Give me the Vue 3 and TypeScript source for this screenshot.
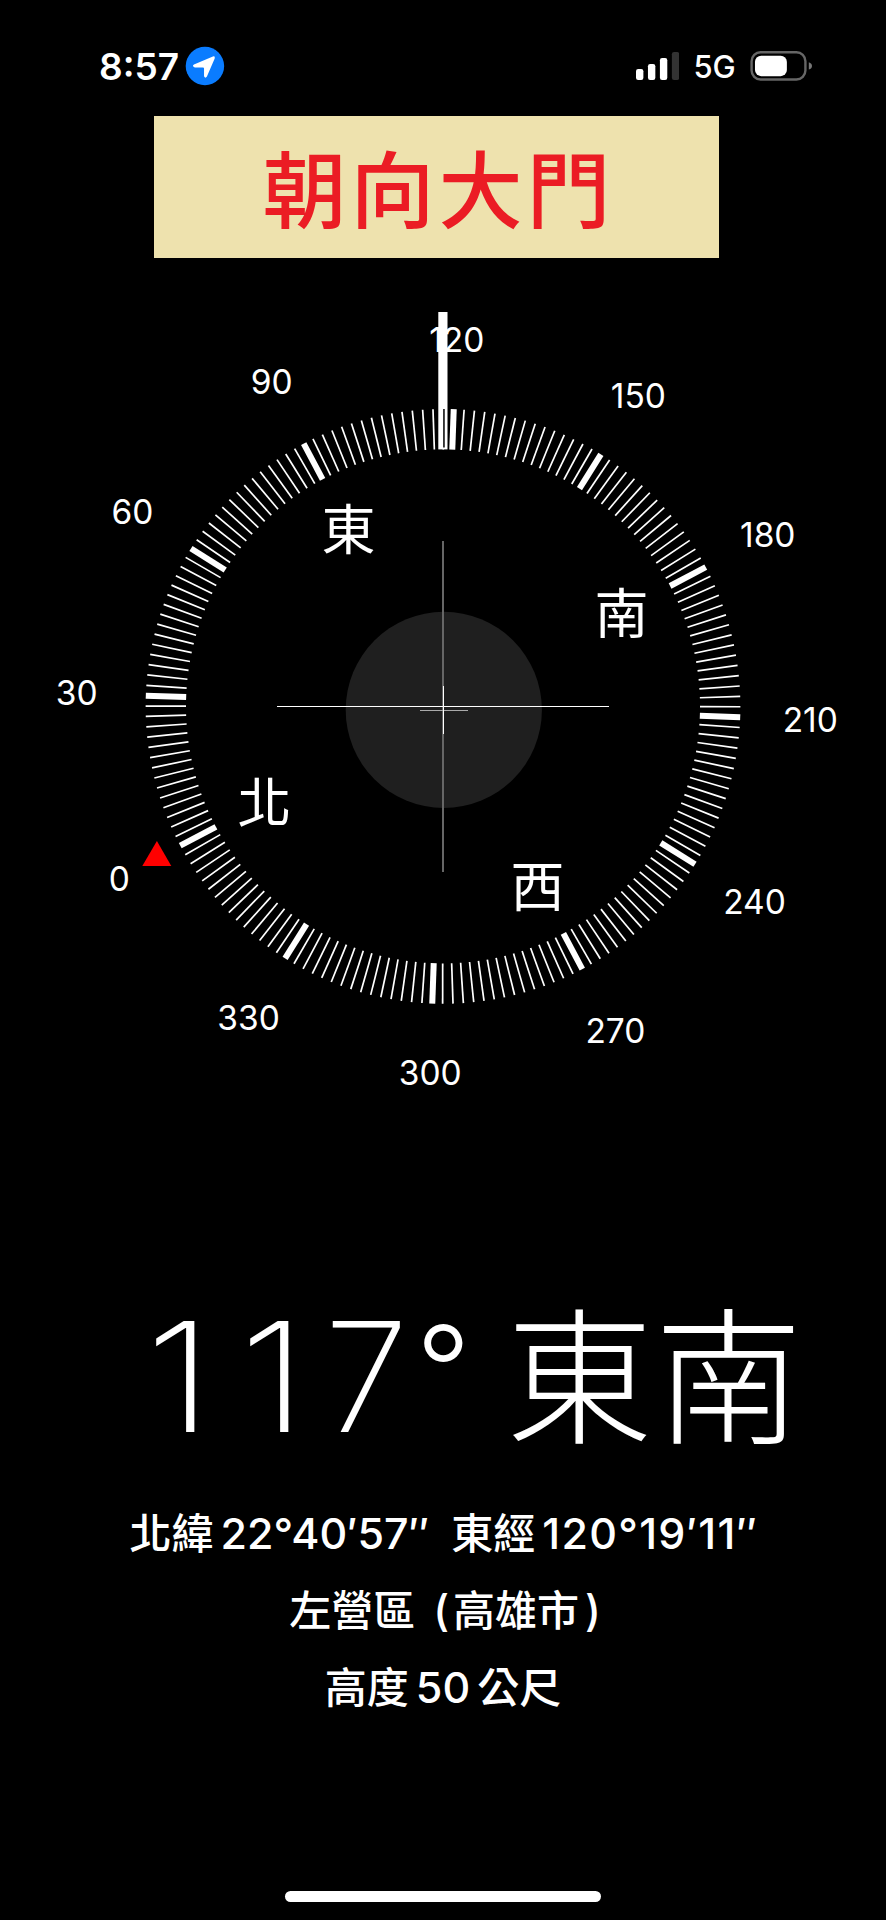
<script setup lang="ts">
interface Mark {
  text: string
  x: number
  y: number
}

const heading = 117.93
const cx = 443
const cy = 426.4

const place = (bearing: number, radius: number) => {
  const a = ((bearing - heading) * Math.PI) / 180
  return { x: cx + radius * Math.sin(a), y: cy - radius * Math.cos(a) }
}

const ticks = Array.from({ length: 180 }, (_, i) => {
  const bearing = i * 2
  const outer = place(bearing, 297.4)
  const inner = place(bearing, 257)
  return { bearing, outer, inner, major: bearing % 30 === 0 }
})

const degrees: Mark[] = Array.from({ length: 12 }, (_, i) => ({
  text: String(i * 30),
  ...place(i * 30, 367),
}))

const directions: Mark[] = ['北', '東', '南', '西'].map((text, i) => ({
  text,
  ...place(i * 90, 202),
}))
</script>

<template>
  <main class="screen">
    <header class="status">
      <span class="time">8:57</span>
      <svg class="location" viewBox="0 0 40 40">
        <circle cx="20" cy="20" r="19.3" fill="#0a7cff" />
        <path d="M9 18.6 28 10.4Q30.6 9.8 29.8 12.4L22 30.6Q20.4 33 19.1 30.4V22.4Q19 21.5 18.1 21.5H9.9Q6.6 20.4 9 18.6Z" fill="#fff" />
      </svg>
      <svg class="signal" viewBox="0 0 44 30">
        <rect x="0" y="18" width="7.4" height="11" rx="2.2" fill="#fff" />
        <rect x="12" y="13" width="7.4" height="16" rx="2.2" fill="#fff" />
        <rect x="24" y="7" width="7.4" height="22" rx="2.2" fill="#fff" />
        <rect x="36" y="1" width="7.4" height="28" rx="2.2" fill="#333" />
      </svg>
      <span class="network">5G</span>
      <svg class="battery" viewBox="0 0 64 32">
        <rect x="1.6" y="2.2" width="54" height="27.4" rx="9" fill="none" stroke="#666" stroke-width="2.4" />
        <rect x="5" y="5.6" width="32" height="20.6" rx="6.2" fill="#fff" />
        <path d="M59 12.2Q62.2 13.4 62.2 15.9T59 19.6Z" fill="#777" />
      </svg>
    </header>

    <h1 class="banner">朝向大門</h1>

    <svg class="compass" viewBox="0 0 886 860">
      <circle cx="443.8" cy="429.9" r="98.1" fill="#1f1f1f" />
      <rect x="442" y="261" width="2" height="331" fill="#666" />
      <rect x="277" y="426" width="332" height="1" fill="#fff" />
      <rect x="420" y="430" width="48" height="1" fill="#aaa" />
      <rect x="443" y="406" width="1" height="48" fill="#fff" />
      <line
        v-for="t in ticks"
        :key="t.bearing"
        :x1="t.inner.x"
        :y1="t.inner.y"
        :x2="t.outer.x"
        :y2="t.outer.y"
        :class="t.major ? 'tick major' : 'tick'"
      />
      <rect x="438.3" y="32" width="9.2" height="137.4" fill="#fff" />
      <rect x="443.2" y="129" width="1.5" height="38.5" fill="#000" />
      <polygon points="156.9,561 171.3,586 142.3,586" fill="#f00" />
      <text v-for="d in degrees" :key="d.text" :x="d.x + 0.5" :y="d.y + 12.3" class="degree">{{ d.text }}</text>
      <text v-for="d in directions" :key="d.text" :x="d.x" :y="d.y + 22" class="direction">{{ d.text }}</text>
    </svg>

    <section class="heading">
      <span class="value"><span class="one hundreds">1</span><span class="one tens">1</span><span>7</span></span>
      <span class="ring">°</span>
      <span class="bearing">東南</span>
    </section>

    <section class="details">
      <p class="coords">
        <span>北緯</span><span class="num lat">22°40′57″</span><span>東經</span><span class="num lon">120°19′11″</span>
      </p>
      <p class="place"><span>左營區</span><span class="num open">(</span><span>高雄市</span><span class="num close">)</span></p>
      <p class="altitude"><span>高度</span><span class="num alt">50</span><span>公尺</span></p>
    </section>

    <div class="home"></div>
  </main>
</template>

<style>
body {
  background: #000;
}
</style>

<style scoped>
.screen {
  display: flex;
  flex-direction: column;
  width: 886px;
  height: 1920px;
  overflow: hidden;
  background: #000;
  color: #fff;
  font-family: Inter, "Noto Sans CJK TC", sans-serif;
}

.status {
  display: flex;
  align-items: center;
  height: 116px;
  padding: 16px 72px 0 99px;
  box-sizing: border-box;
}

.time {
  width: 86px;
  font-size: 37px;
  font-weight: 600;
  white-space: nowrap;
}

.location {
  width: 40px;
  height: 40px;
  margin-top: -1px;
}

.signal {
  width: 44px;
  height: 30px;
  margin-left: 411px;
}

.network {
  width: 57px;
  margin-left: 14px;
  font-size: 31px;
  font-weight: 500;
}

.battery {
  width: 64px;
  height: 32px;
}

.banner {
  width: 565px;
  height: 142px;
  margin: 0 0 0 153.5px;
  padding-left: 5px;
  box-sizing: border-box;
  background: #eee2ae;
  color: #eb1c24;
  font-family: "Noto Sans CJK TC", sans-serif;
  font-size: 84px;
  font-weight: 500;
  line-height: 139px;
  letter-spacing: 4px;
  text-align: center;
}

.compass {
  flex: none;
  width: 886px;
  height: 860px;
  margin-top: 22px;
}

.tick {
  stroke: #fff;
  stroke-width: 1.7;
}

.major {
  stroke-width: 6;
}

.degree {
  fill: #fff;
  font-size: 33.5px;
  font-weight: 400;
  text-anchor: middle;
}

.direction {
  fill: #fff;
  font-family: "Noto Sans CJK TC", sans-serif;
  font-size: 54px;
  text-anchor: middle;
}

.heading {
  display: flex;
  align-items: baseline;
  height: 190px;
  margin-top: 133px;
  padding-left: 144.5px;
  line-height: 190px;
  white-space: nowrap;
}

.value {
  display: flex;
  width: 271.5px;
  font-size: 153px;
  font-weight: 250;
}

.one {
  transform: scaleX(1.17);
  transform-origin: left;
}

.hundreds {
  margin-right: 36px;
}

.tens {
  margin-right: 27px;
}

.ring {
  width: 90px;
  font-size: 120px;
  font-weight: 300;
  transform: translateY(-20px);
}

.bearing {
  font-family: "Noto Sans CJK TC", sans-serif;
  font-size: 147px;
  font-weight: 200;
  letter-spacing: 2px;
}

.details {
  display: flex;
  flex-direction: column;
  margin-top: 29px;
  font-family: "Noto Sans CJK TC", sans-serif;
  font-size: 42px;
  font-weight: 500;
}

.details p {
  display: flex;
  justify-content: center;
  align-items: baseline;
  height: 77px;
  margin: 0;
  line-height: 77px;
  white-space: nowrap;
}

.details .coords {
  padding-left: 2px;
}

.details .place {
  padding-left: 4px;
}

.num {
  font-family: Inter, sans-serif;
  font-size: 43px;
}

.lat {
  margin: 0 22px 0 7px;
}

.lon {
  margin-left: 7px;
  letter-spacing: 1.3px;
}

.open {
  margin: 0 4px 0 18px;
}

.close {
  margin-left: 6px;
}

.alt {
  margin: 0 7px;
}

.home {
  width: 316px;
  height: 11px;
  margin: auto auto 18px;
  border-radius: 6px;
  background: #fff;
}
</style>
